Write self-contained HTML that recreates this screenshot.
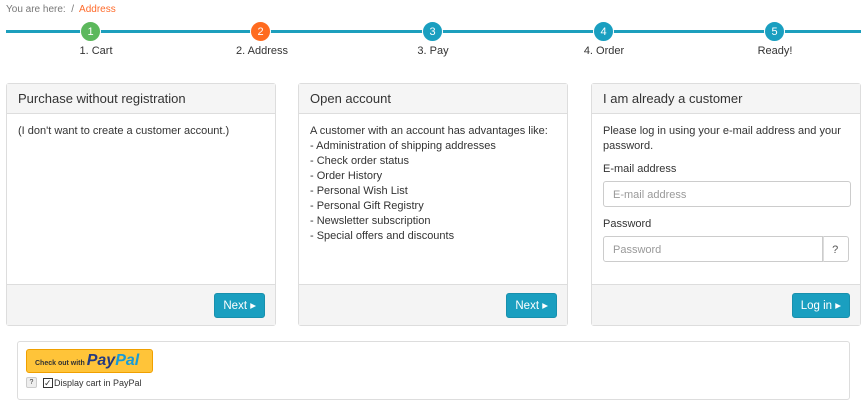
<!DOCTYPE html>
<html><head><style>
*{box-sizing:border-box;margin:0;padding:0}
body{width:866px;height:406px;background:#fff;font-family:"Liberation Sans",sans-serif;color:#333;font-size:11px;position:relative;overflow:hidden}
.abs{position:absolute}
.bc{left:6px;top:4px;font-size:10px;color:#777}
.bc span{color:#ff6b2b}
.line{left:6px;top:30px;width:855px;height:3px;background:#1c9fbd}
.c{width:21px;height:21px;border-radius:50%;color:#fff;font-size:11px;text-align:center;line-height:20px;top:21px;border:1px solid #fff}
.lbl{top:45px;font-size:11px;width:120px;text-align:center;color:#333}
.p{border:1px solid #ddd;border-radius:3px;background:#fff;top:83px;height:243px;width:270px}
.ph{height:30px;background:#f5f5f5;border-bottom:1px solid #ddd;font-size:13px;padding:7px 11px;color:#333}
.pb{padding:10px 11px;font-size:11px;line-height:15px}
.pf{position:absolute;left:0;right:0;bottom:0;height:41px;background:#f4f4f4;border-top:1px solid #ddd}
.btn{position:absolute;right:10px;top:8px;height:25px;background:#1a9fc0;color:#fff;border-radius:3px;font-size:11.5px;line-height:24px;padding:0 8px;border:1px solid #1890ad}
.inp{border:1px solid #ccc;border-radius:3px;height:26px;font-size:11px;color:#999;padding:6px 9px;width:248px}
</style></head><body>
<div class="abs bc">You are here: &nbsp;/&nbsp; <span>Address</span></div>
<div class="abs line"></div>
<div class="abs c" style="left:80px;background:#5cb85c">1</div>
<div class="abs c" style="left:250px;background:#ff6b1f">2</div>
<div class="abs c" style="left:422px;background:#1a9fc0">3</div>
<div class="abs c" style="left:593px;background:#1a9fc0">4</div>
<div class="abs c" style="left:764px;background:#1a9fc0">5</div>
<div class="abs lbl" style="left:36px">1. Cart</div>
<div class="abs lbl" style="left:202px">2. Address</div>
<div class="abs lbl" style="left:373px">3. Pay</div>
<div class="abs lbl" style="left:544px">4. Order</div>
<div class="abs lbl" style="left:715px">Ready!</div>

<div class="abs p" style="left:6px"><div class="ph">Purchase without registration</div><div class="pb">(I don't want to create a customer account.)</div><div class="pf"><div class="btn">Next &#9656;</div></div></div>
<div class="abs p" style="left:298px"><div class="ph">Open account</div><div class="pb">A customer with an account has advantages like:<br>- Administration of shipping addresses<br>- Check order status<br>- Order History<br>- Personal Wish List<br>- Personal Gift Registry<br>- Newsletter subscription<br>- Special offers and discounts</div><div class="pf"><div class="btn">Next &#9656;</div></div></div>
<div class="abs p" style="left:591px"><div class="ph">I am already a customer</div><div class="pb">Please log in using your e-mail address and your password.
<div style="margin-top:8px">E-mail address</div>
<div class="inp" style="margin-top:4px">E-mail address</div>
<div style="margin-top:10px">Password</div>
<div style="margin-top:4px;display:flex"><div class="inp" style="width:222px;border-radius:3px 0 0 3px">Password</div><div class="inp" style="width:26px;border-left:1px solid #ddd;border-radius:0 3px 3px 0;color:#555;padding:6px 8px">?</div></div>
</div><div class="pf"><div class="btn">Log in &#9656;</div></div></div>

<div class="abs" style="left:17px;top:341px;width:833px;height:59px;border:1px solid #ddd;border-radius:3px"></div>
<div class="abs" style="left:26px;top:349px;width:127px;height:24px;background:#ffc439;border:1px solid #f0a000;border-radius:3px;font-size:7px;font-weight:bold;color:#333;padding-left:8px;line-height:22px">Check out with <span style="font-size:16px;font-style:italic;color:#253b80;font-weight:bold">Pay<span style="color:#179bd7">Pal</span></span></div>
<div class="abs" style="left:26px;top:377px;width:11px;height:11px;background:#eee;border:1px solid #ccc;border-radius:2px;font-size:7px;text-align:center;line-height:9px">?</div>
<div class="abs" style="left:43px;top:378px;width:10px;height:10px;border:1px solid #333;font-size:9px;line-height:8px">&#10003;</div>
<div class="abs" style="left:54px;top:378px;font-size:9px;color:#333">Display cart in PayPal</div>
</body></html>
